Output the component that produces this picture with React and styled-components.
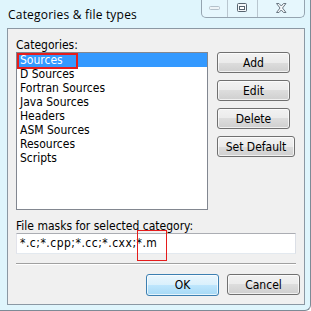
import React from "react";
import styled, { createGlobalStyle } from "styled-components";

const GlobalStyle = createGlobalStyle`
  html, body {
    margin: 0;
    padding: 0;
    background: #ffffff;
  }
  body {
    font-family: "DejaVu Sans Condensed", "DejaVu Sans", sans-serif;
    font-stretch: condensed;
    font-size: 12px;
    color: #000;
  }
`;

const categories = [
  "Sources",
  "D Sources",
  "Fortran Sources",
  "Java Sources",
  "Headers",
  "ASM Sources",
  "Resources",
  "Scripts",
];

const MinIcon = () => (
  <svg width="12" height="5" viewBox="0 0 12 5">
    <rect x="0.5" y="0.5" width="10" height="3" rx="1" fill="#eef4f7" stroke="#b4c1ca" />
  </svg>
);

const MaxIcon = () => (
  <svg width="11" height="10" viewBox="0 0 11 10">
    <rect x="0.5" y="0.5" width="9" height="8" rx="1" fill="#f4f7f9" stroke="#56646f" />
    <rect x="2.5" y="3.5" width="5" height="3" fill="#fff" stroke="#56646f" />
  </svg>
);

const CloseIcon = () => (
  <svg width="11" height="10" viewBox="0 0 11 10">
    <path
      d="M0.5 0.5 H3 L5.25 3 L7.5 0.5 H10 L6.5 5 L10 9.5 H7.5 L5.25 7 L3 9.5 H0.5 L4 5 Z"
      fill="#f5f8fa"
      stroke="#6b7883"
      strokeLinejoin="round"
    />
  </svg>
);

export default function App() {
  return (
    <>
      <GlobalStyle />
      <Window>
        <TitleBar>
          <Title>Categories &amp; file types</Title>
          <Caption>
            <CapButton w={26}>
              <MinIcon />
            </CapButton>
            <CapButton w={30}>
              <MaxIcon />
            </CapButton>
            <CapButton w={46} last>
              <CloseIcon />
            </CapButton>
          </Caption>
        </TitleBar>
        <Client>
          <Label>Categories:</Label>
          <TopRow>
            <ListBox>
              {categories.map((c, i) => (
                <Item key={c} selected={i === 0}>
                  {c}
                </Item>
              ))}
              <Mark style={{ left: 0, top: 0, width: 61, height: 16 }} thick />
            </ListBox>
            <Buttons>
              <Button>Add</Button>
              <Button>Edit</Button>
              <Button>Delete</Button>
              <Button wide>Set Default</Button>
            </Buttons>
          </TopRow>
          <MaskLabel>File masks for selected category:</MaskLabel>
          <TextBox>
            *.c;*.cpp;*.cc;*.cxx;*.m
            <Mark style={{ left: 120, top: -4, width: 30, height: 31 }} />
          </TextBox>
          <Separator />
          <Footer>
            <Button primary>OK</Button>
            <Button>Cancel</Button>
          </Footer>
        </Client>
      </Window>
    </>
  );
}

const Window = styled.div`
  width: 310px;
  height: 310px;
  background: #dff5fc;
  border-right: 1px solid #7d8b96;
  border-bottom: 1px solid #7d8b96;
  border-bottom-right-radius: 6px;
  display: flex;
  flex-direction: column;
`;

const TitleBar = styled.div`
  height: 28px;
  display: flex;
  align-items: flex-start;
  justify-content: space-between;
`;

const Title = styled.div`
  font-family: "Open Sans", "Noto Sans", sans-serif;
  font-stretch: normal;
  font-size: 12px;
  letter-spacing: 0.2px;
  padding: 6px 0 0 8px;
  color: #000;
`;

const Caption = styled.div`
  display: flex;
  margin-right: 5px;
  height: 18px;
  border: 1px solid #95a4b0;
  border-top: none;
  border-radius: 0 0 5px 5px;
  background: #e6f7fd;
  box-sizing: border-box;
`;

const CapButton = styled.div`
  width: ${(p) => p.w}px;
  display: flex;
  align-items: center;
  justify-content: center;
  border-right: ${(p) => (p.last ? "none" : "1px solid #b9c6cf")};
  box-sizing: border-box;
  padding-bottom: 1px;
`;

const Client = styled.div`
  margin-left: 7px;
  width: 298px;
  height: 277px;
  box-sizing: border-box;
  border: 1px solid #8b98a3;
  background: #f0f0f0;
  padding: 9px 0 0 8px;
  display: flex;
  flex-direction: column;
`;

const Label = styled.div`
  height: 14px;
  line-height: 14px;
`;

const TopRow = styled.div`
  display: flex;
  gap: 9px;
`;

const ListBox = styled.div`
  position: relative;
  width: 192px;
  height: 158px;
  box-sizing: border-box;
  border: 1px solid #828790;
  background: #fff;
`;

const Item = styled.div`
  height: 14px;
  line-height: 14px;
  padding-left: 3px;
  background: ${(p) => (p.selected ? "#3399ff" : "transparent")};
  color: ${(p) => (p.selected ? "#fff" : "#000")};
`;

const Mark = styled.div`
  position: absolute;
  box-sizing: border-box;
  border: ${(p) => (p.thick ? 2 : 1)}px solid #e51c1c;
  pointer-events: none;
`;

const Buttons = styled.div`
  display: flex;
  flex-direction: column;
  gap: 7px;
`;

const Button = styled.div`
  width: ${(p) => (p.wide ? 78 : 73)}px;
  height: ${(p) => (p.primary ? 22 : 21)}px;
  box-sizing: border-box;
  border: 1px solid ${(p) => (p.primary ? "#3c7fb1" : "#707070")};
  border-radius: 3px;
  background: ${(p) =>
    p.primary
      ? "linear-gradient(#eaf6fd 0%, #d9f0fc 50%, #bee6fd 50%, #a7d9f5 100%)"
      : "linear-gradient(#f2f2f2 0%, #ebebeb 50%, #dddddd 50%, #cfcfcf 100%)"};
  box-shadow: inset 0 0 0 1px rgba(255, 255, 255, 0.7);
  display: flex;
  align-items: center;
  justify-content: center;
`;

const MaskLabel = styled.div`
  margin-top: 9px;
  height: 14px;
  line-height: 14px;
`;

const TextBox = styled.div`
  position: relative;
  width: 280px;
  height: 21px;
  box-sizing: border-box;
  border: 1px solid #abadb3;
  border-color: #abadb3 #dbdfe6 #e3e9ef #e2e3ea;
  background: #fff;
  padding-left: 3px;
  line-height: 19px;
  letter-spacing: 0.5px;
`;

const Separator = styled.div`
  margin-top: 9px;
  width: 280px;
  height: 1px;
  background: #a0a0a0;
  border-bottom: 1px solid #ffffff;
`;

const Footer = styled.div`
  margin-top: 9px;
  display: flex;
  justify-content: flex-end;
  gap: 8px;
  width: 284px;
`;
